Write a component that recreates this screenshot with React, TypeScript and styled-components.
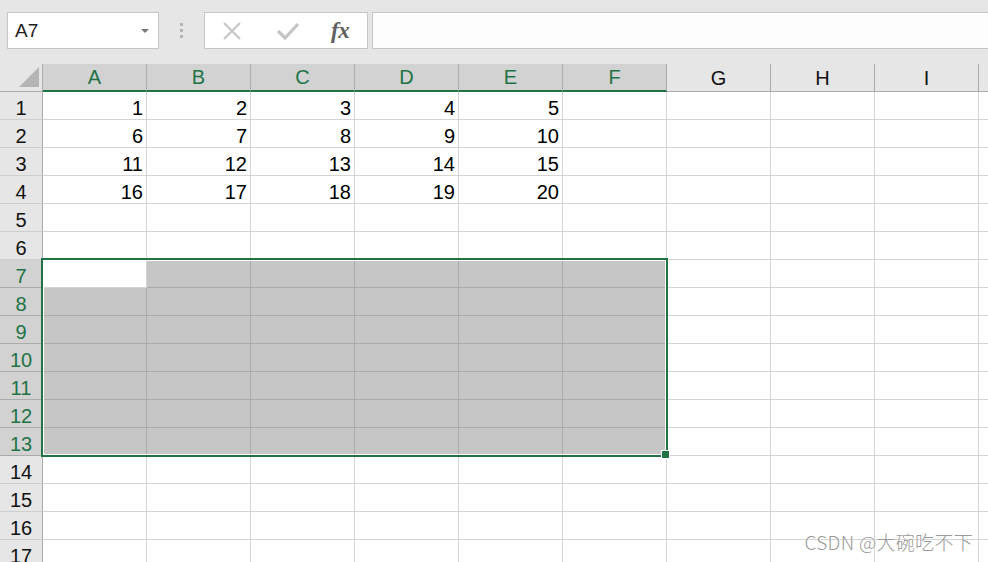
import React from "react";
import styled, { createGlobalStyle } from "styled-components";

const Global = createGlobalStyle`
  html, body { margin: 0; padding: 0; overflow: hidden; background: #ffffff; }
  body { font-family: "Liberation Sans", Arial, sans-serif; }
`;

const GREEN = "#217346";

const Page = styled.div`
  position: relative;
  width: 988px;
  height: 562px;
  overflow: hidden;
  background: #ffffff;
`;

const TopBar = styled.div`
  height: 64px;
  box-sizing: border-box;
  padding: 12px 0 0 7px;
  background: #e6e6e6;
  display: flex;
  align-items: flex-start;
`;

const NameBox = styled.div`
  width: 152px;
  flex: none;
  height: 37px;
  box-sizing: border-box;
  border: 1px solid #c6c6c6;
  background: #ffffff;
  display: flex;
  align-items: center;
  justify-content: space-between;
  padding: 0 9px 0 7px;
  font-size: 19px;
  color: #222;
`;

const Caret = styled.span`
  width: 0;
  height: 0;
  border-left: 4px solid transparent;
  border-right: 4px solid transparent;
  border-top: 4px solid #7a7a7a;
`;

const Grip = styled.div`
  width: 45px;
  flex: none;
  height: 37px;
  display: flex;
  flex-direction: column;
  align-items: center;
  justify-content: center;
  gap: 3px;
  span {
    width: 3px;
    height: 3px;
    background: #b4b4b4;
  }
`;

const FxButtons = styled.div`
  width: 164px;
  flex: none;
  height: 37px;
  box-sizing: border-box;
  border: 1px solid #c6c6c6;
  background: #ffffff;
  display: flex;
  align-items: center;
  padding-left: 17px;
`;

const IconSlot = styled.div`
  width: 55px;
  height: 35px;
  display: flex;
  align-items: center;
  justify-content: flex-start;
`;

const FxText = styled.span`
  font-family: "Liberation Serif", "Times New Roman", serif;
  font-style: italic;
  font-weight: 600;
  font-size: 23px;
  color: #606060;
  letter-spacing: -0.5px;
  margin-left: -1px;
`;

const FormulaInput = styled.div`
  flex: 1;
  height: 37px;
  margin-left: 4px;
  box-sizing: border-box;
  border: 1px solid #c6c6c6;
  border-right: none;
  background: #fdfdfd;
`;

const Sheet = styled.div`
  position: relative;
`;

const Row = styled.div`
  display: flex;
  height: 28px;
`;

const Corner = styled.div`
  width: 43px;
  flex: none;
  height: 28px;
  box-sizing: border-box;
  background: #e6e6e6;
  border-right: 1px solid #ababab;
  border-bottom: 1px solid #ababab;
  display: flex;
  align-items: flex-end;
  justify-content: flex-end;
  padding: 0 3px 4px 0;
`;

const ColHead = styled.div<{ $sel?: boolean }>`
  width: 104px;
  flex: none;
  height: 28px;
  box-sizing: border-box;
  background: ${(p) => (p.$sel ? "#d2d2d2" : "#e6e6e6")};
  border-right: 1px solid #ababab;
  border-bottom: ${(p) => (p.$sel ? `2px solid ${GREEN}` : "1px solid #ababab")};
  color: ${(p) => (p.$sel ? GREEN : "#111")};
  font-size: 20px;
  display: flex;
  align-items: center;
  justify-content: center;
  padding-top: 1px;
`;

const RowHead = styled.div<{ $sel?: boolean }>`
  width: 43px;
  flex: none;
  height: 28px;
  box-sizing: border-box;
  background: ${(p) => (p.$sel ? "#d2d2d2" : "#e6e6e6")};
  border-right: 1px solid #ababab;
  border-bottom: 1px solid ${(p) => (p.$sel ? "#ababab" : "#cfcfcf")};
  color: ${(p) => (p.$sel ? GREEN : "#111")};
  font-size: 20px;
  line-height: 22px;
  display: flex;
  align-items: flex-end;
  justify-content: center;
`;

const Cell = styled.div<{ $sel?: boolean }>`
  width: 104px;
  flex: none;
  height: 28px;
  box-sizing: border-box;
  background: ${(p) => (p.$sel ? "#c6c6c6" : "#ffffff")};
  border-right: 1px solid ${(p) => (p.$sel ? "#ababab" : "#d4d4d4")};
  border-bottom: 1px solid ${(p) => (p.$sel ? "#ababab" : "#d4d4d4")};
  font-size: 20px;
  line-height: 22px;
  color: #000;
  display: flex;
  align-items: flex-end;
  justify-content: flex-end;
  padding-right: 3px;
`;

const Selection = styled.div`
  position: absolute;
  left: 41px;
  top: 194px;
  width: 627px;
  height: 199px;
  box-sizing: border-box;
  border: 2px solid ${GREEN};
  box-shadow: inset 0 0 0 1px #ffffff;
  pointer-events: none;
`;

const FillHandle = styled.div`
  position: absolute;
  left: 662px;
  top: 387px;
  width: 7px;
  height: 7px;
  background: ${GREEN};
  outline: 1px solid #ffffff;
`;

const Watermark = styled.div`
  position: absolute;
  right: 15px;
  bottom: 7px;
  font-family: "Noto Sans CJK SC", "Liberation Sans", sans-serif;
  font-size: 19px;
  font-weight: 300;
  color: #9a9a9a;
  text-shadow: 0 0 2px #ffffff;
  letter-spacing: 0.3px;
`;

const cols = ["A", "B", "C", "D", "E", "F", "G", "H", "I", "J"];
const selCols = new Set(["A", "B", "C", "D", "E", "F"]);

const data: Record<number, number[]> = {
  1: [1, 2, 3, 4, 5],
  2: [6, 7, 8, 9, 10],
  3: [11, 12, 13, 14, 15],
  4: [16, 17, 18, 19, 20],
};

const rows = Array.from({ length: 17 }, (_, i) => i + 1);

export default function App() {
  return (
    <Page>
      <Global />
      <TopBar>
        <NameBox>
          <span>A7</span>
          <Caret />
        </NameBox>
        <Grip>
          <span />
          <span />
          <span />
        </Grip>
        <FxButtons>
          <IconSlot>
            <svg width="20" height="20" viewBox="0 0 20 20">
              <path d="M2 2 L18 18 M18 2 L2 18" stroke="#c4c4c4" strokeWidth="2" fill="none" />
            </svg>
          </IconSlot>
          <IconSlot>
            <svg width="22" height="18" viewBox="0 0 22 18">
              <path d="M1 9 L8 16 L21 2" stroke="#c4c4c4" strokeWidth="3.2" fill="none" />
            </svg>
          </IconSlot>
          <FxText>fx</FxText>
        </FxButtons>
        <FormulaInput />
      </TopBar>
      <Sheet>
        <Row>
          <Corner>
            <svg width="20" height="20" viewBox="0 0 20 20">
              <path d="M20 0 L20 20 L0 20 Z" fill="#b5b5b5" />
            </svg>
          </Corner>
          {cols.map((c) => (
            <ColHead key={c} $sel={selCols.has(c)}>
              {c === "J" ? "" : c}
            </ColHead>
          ))}
        </Row>
        {rows.map((r) => {
          const rowSel = r >= 7 && r <= 13;
          return (
            <Row key={r}>
              <RowHead $sel={rowSel}>{r}</RowHead>
              {cols.map((c, ci) => {
                const inSel = rowSel && ci < 6 && !(r === 7 && ci === 0);
                const v = data[r]?.[ci];
                return (
                  <Cell key={c} $sel={inSel}>
                    {v !== undefined ? v : ""}
                  </Cell>
                );
              })}
            </Row>
          );
        })}
        <Selection />
        <FillHandle />
      </Sheet>
      <Watermark>CSDN @大碗吃不下</Watermark>
    </Page>
  );
}
